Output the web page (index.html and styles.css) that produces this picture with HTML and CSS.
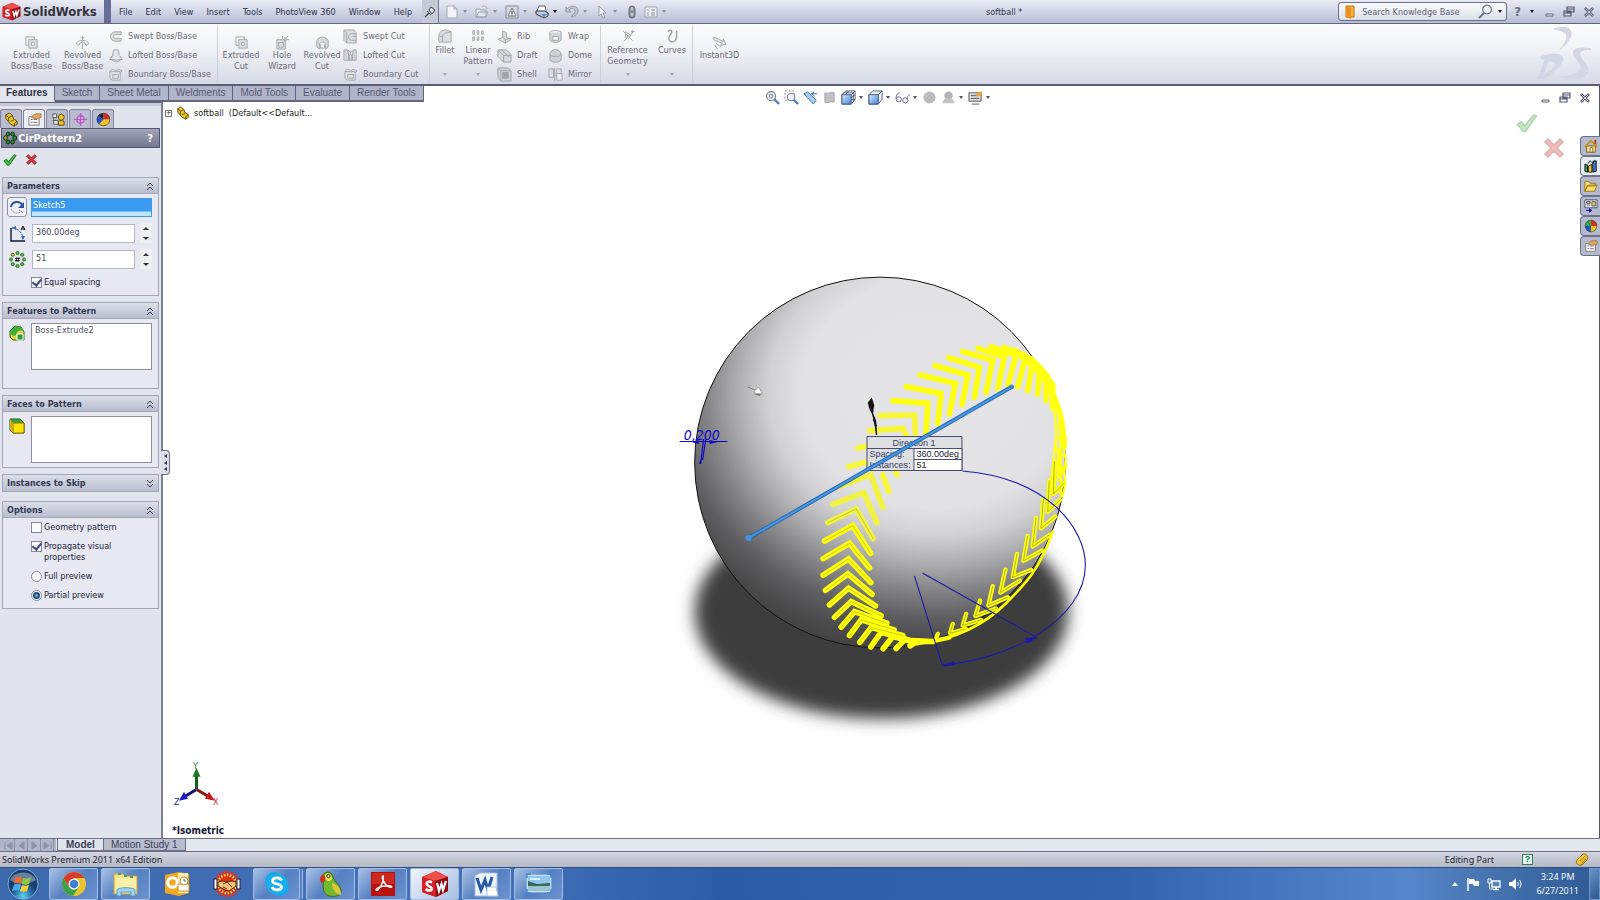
FILE: index.html
```html
<!DOCTYPE html>
<html lang="en">
<head>
<meta charset="utf-8">
<title>SolidWorks - softball</title>
<link rel="stylesheet" href="styles.css">
</head>
<body>
<svg class="defs" aria-hidden="true">
  <defs>
    <linearGradient id="gold" x2="1" y2="1"><stop offset="0" stop-color="#ffe860"/><stop offset="1" stop-color="#d89a10"/></linearGradient>
    <linearGradient id="blueface" x2="1" y2="1"><stop offset="0" stop-color="#d8ecff"/><stop offset="1" stop-color="#3f83d8"/></linearGradient>
    <symbol id="part" viewBox="0 0 16 16"><path d="M2 3l4-2 3 3 1 3 4 3v3l-3 2-4-2-5-6z" fill="#f0c828" stroke="#5a4208"/><path d="M2 3l3 3 4-2M5 6v4M7 10l4-2M11 12l3-2M11 12v3" fill="none" stroke="#5a4208"/></symbol>
    <symbol id="prop" viewBox="0 0 16 16"><path d="M2 5h11v9H2z" fill="#fafafa" stroke="#777"/><path d="M4 8h2M7 8h4M4 11h2M7 11h4" stroke="#667"/><path d="M5 6c2-5 5-4 10-4v4c-3 0-4 2-7 1z" fill="#e0a860" stroke="#96602a" stroke-width=".7"/></symbol>
    <symbol id="ball" viewBox="0 0 16 16"><path d="M8 8V1a7 7 0 0 0-7 7z" fill="#2bad3b"/><path d="M8 8V1a7 7 0 0 1 7 7z" fill="#d92a25"/><path d="M8 8h7a7 7 0 0 1-7 7z" fill="#efc323"/><path d="M8 8v7a7 7 0 0 1-7-7z" fill="#2554c4"/><circle cx="8" cy="8" r="6.7" fill="none" stroke="#444" stroke-width=".7"/></symbol>
    <symbol id="ball2" viewBox="0 0 16 16"><path d="M8 8L2 4a7 7 0 0 1 6-3z" fill="#222"/><path d="M8 8V1a7 7 0 0 1 7 7z" fill="#d92a25"/><path d="M8 8h7a7 7 0 0 1-12 5z" fill="#efc323"/><path d="M8 8l-5 5a7 7 0 0 1-1-9z" fill="#2554c4"/><circle cx="8" cy="8" r="6.7" fill="none" stroke="#444" stroke-width=".7"/></symbol>
    <symbol id="check" viewBox="0 0 16 16"><path d="M1 9l3-2 2 3 7-8 2 1-8 11H5z" fill="#3dbb3d" stroke="#167a1c"/></symbol>
    <symbol id="cross" viewBox="0 0 16 16"><path d="M2 4l2-2 4 4 4-4 2 2-4 4 4 4-2 2-4-4-4 4-2-2 4-4z" fill="#e03030" stroke="#8f1515"/></symbol>
    <symbol id="up2" viewBox="0 0 10 10"><path d="M2 5l3-3 3 3M2 9l3-3 3 3" fill="none" stroke="#333a4d"/></symbol>
    <symbol id="down2" viewBox="0 0 10 10"><path d="M2 1l3 3 3-3M2 5l3 3 3-3" fill="none" stroke="#333a4d"/></symbol>
    <symbol id="tri" viewBox="0 0 6 4"><path d="M1 0h4L3 3z" fill="currentColor"/></symbol>
    <symbol id="min" viewBox="0 0 12 12"><path d="M3 8h7v2H3z" fill="#eef" stroke="#555b70" stroke-width=".9"/></symbol>
    <symbol id="restore" viewBox="0 0 12 12"><path d="M4 1h7v5H4zM4 3h7M1 5h7v5H1zM1 7h7" fill="none" stroke="#555b70" stroke-width="1.2"/></symbol>
    <symbol id="close" viewBox="0 0 12 12"><path d="M2 2l8 8M10 2l-8 8" stroke="#555b70" stroke-width="2.6"/><path d="M2.500 2.500l7 7M9.500 2.500l-7 7" stroke="#dfe2ee" stroke-width=".9"/></symbol>
    <symbol id="swcube" viewBox="0 0 28 28"><path d="M1 7L15 1l12 6v14l-12 6L1 22z" fill="#b8141c"/><path d="M1 7l14-6 12 6-13 4z" fill="#ee5048"/><path d="M14 11l13-4v14l-12 6z" fill="#8e0d14"/><path d="M1 7l13 4 1 16L1 22z" fill="#d62128"/><path d="M11 12.500c-3-2-6-.5-5 2 .8 2 5 2 4.700 4.500-.3 2-4 2-6 0" fill="none" stroke="#fff" stroke-width="2.500"/><path d="M16 13l2 8 2.500-7 1.500 6 3-9" fill="none" stroke="#fff" stroke-width="2.200"/></symbol>
    <symbol id="cube" viewBox="0 0 16 16"><path d="M1 5l4-4h10v9l-4 5H1z" fill="#eef5ff" stroke="#4a5878"/><path d="M1 5h10v10H1z" fill="url(#blueface)" stroke="#4a5878"/><path d="M11 5l4-4" stroke="#4a5878"/></symbol>
    <symbol id="cubewire" viewBox="0 0 16 16"><path d="M1 5l4-4h10v9l-4 5H1z" fill="#fff" stroke="#4a5878"/><path d="M1 5h10v10H1z" fill="url(#blueface)" stroke="#4a5878"/><path d="M11 5l4-4M3 3h10v9M8 1L5 5M11 10h4M11 8l4-3" fill="none" stroke="#4a5878"/></symbol>
    <symbol id="box3" viewBox="0 0 16 16"><path d="M2 2h9v4M2 2v9h4" fill="none" stroke="currentColor"/><path d="M5 5h9v9H5z" fill="#dfe0e5" stroke="currentColor"/><path d="M8 8h3v3H8z" fill="#fff" stroke="currentColor"/></symbol>
    <symbol id="revolve" viewBox="0 0 16 16"><path d="M8 1v14M6 3h4M3 11c-3-3 0-5 5-5s8 2 5 5M3 11c2 1 2-4 4-3M13 11c-2 1-2-4-4-3" fill="none" stroke="currentColor"/></symbol>
    <symbol id="sweep" viewBox="0 0 16 16"><path d="M14 3H8C1 3 1 13 8 13h6v-3H8c-3 0-3-4 0-4h6z" fill="#dcdde3" stroke="currentColor"/></symbol>
    <symbol id="loft" viewBox="0 0 16 16"><path d="M6 2h5l1 6 3 4-6 3-7-3 3-4z" fill="#e4e5ea" stroke="currentColor"/><path d="M5 8l-3 4 7 1 6-1" fill="none" stroke="currentColor"/></symbol>
    <symbol id="bound" viewBox="0 0 16 16"><path d="M2 5h11v9H4L2 11zM2 5c1-3 4-3 6-1 3-2 5-1 7 0l-2 2M5 8h6v4H5z" fill="#e2e3e8" stroke="currentColor"/></symbol>
    <symbol id="dome" viewBox="0 0 16 16"><path d="M2 7c0-7 12-7 12 0v6c-3 3-9 3-12 0z" fill="#d0d1d6" stroke="currentColor"/><path d="M2 7c3 3 9 3 12 0" fill="none" stroke="currentColor"/></symbol>
    <symbol id="wrap" viewBox="0 0 16 16"><ellipse cx="8" cy="4" rx="6" ry="2.500" fill="#eee" stroke="currentColor"/><path d="M2 4v8c3 3 9 3 12 0V4M5 8h6v4H5z" fill="#d4d5da" stroke="currentColor"/></symbol>
    <symbol id="shell" viewBox="0 0 16 16"><path d="M1 1h11l3 3v11H4l-3-3z" fill="#d2d3d8" stroke="currentColor"/><path d="M6 6h6v6H6z" fill="#a3a4aa" stroke="currentColor"/><path d="M1 1l3 3h11M4 4v11" fill="none" stroke="currentColor"/></symbol>
    <symbol id="draft" viewBox="0 0 16 16"><path d="M1 2h9l5 5v8H7L1 9z" fill="#d8d9de" stroke="currentColor"/><path d="M1 2l6 6v7M7 8h8M5 2l8 8" fill="none" stroke="currentColor"/></symbol>
    <symbol id="rib" viewBox="0 0 16 16"><path d="M1 11l5-2V2l4 2v5l5 2-6 4z" fill="#dcdde2" stroke="currentColor"/><path d="M6 9l3 2 6-1M9 11v4" fill="none" stroke="currentColor"/></symbol>
    <symbol id="mirror" viewBox="0 0 16 16"><path d="M1 2h5v9H1zM9 2h5v9H9z" fill="#dcdde2" stroke="currentColor"/><path d="M7 1v14M9 7h6v7H9z" fill="#eee" stroke="currentColor"/></symbol>
    <symbol id="cutloft" viewBox="0 0 16 16"><path d="M1 2h4l2 11H1zM14 2h-3L9 13h5zM5 2l3 3 3-3M6 9l2-3 2 3v4H6z" fill="#d5d6db" stroke="currentColor"/></symbol>
    <symbol id="cutsweep" viewBox="0 0 16 16"><path d="M1 1h11l2 3v11H4l-3-3z" fill="#dcdde2" stroke="currentColor"/><path d="M14 5H9c-4 0-4 7 0 7h5M14 8h-4M1 1l3 3v11" fill="none" stroke="currentColor"/></symbol>
  </defs>
</svg>

<header class="titlebar">
  <div class="brand"><svg width="19" height="19"><use href="#swcube"/></svg><b>SolidWorks</b></div>
  <nav class="menu">
    <a href="#">File</a><a href="#">Edit</a><a href="#">View</a><a href="#">Insert</a><a href="#">Tools</a><a href="#">PhotoView 360</a><a href="#">Window</a><a href="#">Help</a>
  </nav>
  <button class="pin" aria-label="Pin menu"><svg width="12" height="12" viewBox="0 0 12 12"><path d="M1 11l4-4" stroke="#444" stroke-width="1.300"/><path d="M3 5l4 4M5 4l2-3 4 3-3 4z" fill="#dde" stroke="#444"/></svg></button>
  <div class="quick">
    <button aria-label="New"><svg width="14" height="14" viewBox="0 0 14 14"><path d="M2 1h7l3 3v9H2zM9 1v3h3" fill="#f4f5f8" stroke="#a8abb8"/></svg></button><svg class="dd" width="6" height="4"><use href="#tri"/></svg>
    <button aria-label="Open"><svg width="14" height="14" viewBox="0 0 14 14"><path d="M1 4h4l1 1h5v7H1zM1 12l3-5h9l-2 5zM7 2c2-2 4-1 5 2" fill="#e4e5ea" stroke="#a0a3b0"/></svg></button><svg class="dd" width="6" height="4"><use href="#tri"/></svg>
    <button aria-label="Save"><svg width="14" height="14" viewBox="0 0 14 14"><path d="M1 1h12v12H1z" fill="#d4d6de" stroke="#8a8d98"/><path d="M7 3l4 8H3z" fill="#f2f2f2" stroke="#777"/><path d="M7 6v3M7 9.500v1" stroke="#333"/></svg></button><svg class="dd" width="6" height="4"><use href="#tri"/></svg>
    <button aria-label="Print"><svg width="14" height="14" viewBox="0 0 14 14"><path d="M2 6l2-5h6l1 5" fill="#fff" stroke="#667"/><path d="M1 6h9l3 2v3l-4 2-8-4z" fill="#c8ccd6" stroke="#334"/><path d="M6 9l6 0-3 3z" fill="#3f95dc"/></svg></button><svg class="dd dark" width="6" height="4"><use href="#tri"/></svg>
    <button aria-label="Undo"><svg width="14" height="14" viewBox="0 0 14 14"><path d="M1 2v5h5L4 5c3-3 7-1 6 2-1 2-3 3-4 5 4-1 7-3 7-6 0-5-7-7-11-2z" fill="#c5c7d0" stroke="#9699a6"/></svg></button><svg class="dd" width="6" height="4"><use href="#tri"/></svg>
    <button aria-label="Select"><svg width="14" height="14" viewBox="0 0 14 14"><path d="M4 1v10l2-2 2 4 2-1-2-4h3z" fill="#eceef3" stroke="#9da0ad"/></svg></button><svg class="dd" width="6" height="4"><use href="#tri"/></svg>
    <button aria-label="Rebuild"><svg width="14" height="14" viewBox="0 0 14 14"><rect x="4" y="1" width="6" height="12" rx="3" fill="#8a8d98" stroke="#70737e"/><circle cx="7" cy="4" r="1.500" fill="#c5c7d0"/><circle cx="7" cy="9.500" r="1.500" fill="#c5c7d0"/></svg></button>
    <button aria-label="Options"><svg width="14" height="14" viewBox="0 0 14 14"><path d="M1 2h12v10H1z" fill="#eceef3" stroke="#a0a3b0"/><path d="M3 5h2M7 5h4M3 8h2M7 8h4M3 10h2M7 10h4" stroke="#8c8f9c"/></svg></button><svg class="dd" width="6" height="4"><use href="#tri"/></svg>
  </div>
  <h1 class="doc-title">softball *</h1>
  <div class="search">
    <svg width="12" height="14" viewBox="0 0 12 14"><path d="M2 1h8v11H2z" fill="#f8b840" stroke="#b87810"/><path d="M2 1l5 2v11l-5-2z" fill="#f09018"/></svg>
    <input type="text" value="Search Knowledge Base" aria-label="Search Knowledge Base">
    <svg width="15" height="15" viewBox="0 0 15 15"><circle cx="9" cy="5.500" r="4.300" fill="#eef7ff" stroke="#66718a" stroke-width="1.200"/><path d="M6 9l-5 5" stroke="#66718a" stroke-width="2"/></svg>
    <svg class="dd dark" width="6" height="4"><use href="#tri"/></svg>
  </div>
  <div class="wincontrols">
    <button class="help" aria-label="Help">?</button><svg class="dd dark" width="6" height="4"><use href="#tri"/></svg>
    <button aria-label="Minimize"><svg width="12" height="12"><use href="#min"/></svg></button>
    <button aria-label="Restore"><svg width="12" height="12"><use href="#restore"/></svg></button>
    <button aria-label="Close"><svg width="12" height="12"><use href="#close"/></svg></button>
  </div>
</header>

<section class="ribbon" aria-label="Features commands">
  <button class="big w50"><svg width="15" height="15"><use href="#box3"/></svg><span>Extruded<br>Boss/Base</span></button>
  <button class="big w50"><svg width="15" height="15"><use href="#revolve"/></svg><span>Revolved<br>Boss/Base</span></button>
  <div class="stack w110">
    <button><svg width="15" height="15"><use href="#sweep"/></svg>Swept Boss/Base</button>
    <button><svg width="15" height="15"><use href="#loft"/></svg>Lofted Boss/Base</button>
    <button><svg width="15" height="15"><use href="#bound"/></svg>Boundary Boss/Base</button>
  </div>
  <i class="sep"></i>
  <button class="big w44"><svg width="15" height="15"><use href="#box3"/></svg><span>Extruded<br>Cut</span></button>
  <button class="big w38"><svg width="15" height="15" viewBox="0 0 16 16"><path d="M2 5h9v10H2zM4 8h5v5H4z" fill="#dedfe4" stroke="currentColor"/><path d="M9 7l5-6M8 1v3M12 5h3M10 2l2 4" stroke="currentColor"/></svg><span>Hole<br>Wizard</span></button>
  <button class="big w42"><svg width="15" height="15" viewBox="0 0 16 16"><path d="M2 6c2-5 10-5 12 0v7l-3 2v-6c0-2-6-2-6 0v6l-3-2z" fill="#d9dadf" stroke="currentColor"/><path d="M6 10v4h4v-4" fill="none" stroke="currentColor"/></svg><span>Revolved<br>Cut</span></button>
  <div class="stack w85">
    <button><svg width="15" height="15"><use href="#cutsweep"/></svg>Swept Cut</button>
    <button><svg width="15" height="15"><use href="#cutloft"/></svg>Lofted Cut</button>
    <button><svg width="15" height="15"><use href="#bound"/></svg>Boundary Cut</button>
  </div>
  <i class="sep"></i>
  <button class="big menu-btn w28"><svg width="14" height="14" viewBox="0 0 16 16"><path d="M1 15V8c0-4 3-7 8-7l6 2v12z" fill="#dcdde2" stroke="currentColor"/><path d="M1 8l4 1c0-3 3-5 6-5l4-1M5 9v6" fill="none" stroke="currentColor"/></svg><span>Fillet</span><svg class="dd" width="6" height="4"><use href="#tri"/></svg></button>
  <button class="big menu-btn w38"><svg width="14" height="14" viewBox="0 0 16 16"><path d="M2 2h2v4H2zM7 2h2v4H7zM12 2h2v4h-2zM2 9h2v4H2zM7 9h2v4H7zM12 9h2v4h-2z" fill="#ddd" stroke="currentColor"/></svg><span>Linear<br>Pattern</span><svg class="dd" width="6" height="4"><use href="#tri"/></svg></button>
  <div class="stack w50">
    <button><svg width="15" height="15"><use href="#rib"/></svg>Rib</button>
    <button><svg width="15" height="15"><use href="#draft"/></svg>Draft</button>
    <button><svg width="15" height="15"><use href="#shell"/></svg>Shell</button>
  </div>
  <div class="stack w50">
    <button><svg width="15" height="15"><use href="#wrap"/></svg>Wrap</button>
    <button><svg width="15" height="15"><use href="#dome"/></svg>Dome</button>
    <button><svg width="15" height="15"><use href="#mirror"/></svg>Mirror</button>
  </div>
  <i class="sep"></i>
  <button class="big menu-btn w50"><svg width="14" height="14" viewBox="0 0 16 16"><path d="M2 2l11 11M3 14L14 3M8 12l4-6M13 1v4M11 3h5M5 3l5 3-5 4z" fill="none" stroke="currentColor"/></svg><span>Reference<br>Geometry</span><svg class="dd" width="6" height="4"><use href="#tri"/></svg></button>
  <button class="big menu-btn w38"><svg width="14" height="14" viewBox="0 0 16 16"><path d="M3 3c4-3 6-1 4 2s-4 5-2 8 7 2 8-2-1-6 1-9" fill="none" stroke="currentColor" stroke-width="1.800"/></svg><span>Curves</span><svg class="dd" width="6" height="4"><use href="#tri"/></svg></button>
  <i class="sep"></i>
  <button class="big w50"><svg width="15" height="15" viewBox="0 0 16 16"><path d="M2 2l10 5v-3l3 6-6 1 2-2-9-4zM4 9l6 4M3 11l3 4" fill="#e8e9ee" stroke="currentColor"/></svg><span>Instant3D</span></button>
  <svg class="ds" width="58" height="58" viewBox="0 0 58 58"><path d="M18 4c16-5 26 2 6 21 8-10 12-18-6-21zM4 32c18-6 34-3 12 16-6 5-10 6-14 6l7-19c-2-1-4-1-5-3zm8 4L7 50c12-5 18-15 5-14zM55 24c-18-3-22 2-13 12 6 7 5 13-15 16 22 4 30-3 22-14-7-9-9-13 6-14z" fill="#d3d6e4" stroke="#d3d6e4"/></svg>
</section>

<main class="workspace">
  <nav class="cmdtabs">
    <a href="#" class="on">Features</a><a href="#">Sketch</a><a href="#">Sheet Metal</a><a href="#">Weldments</a><a href="#">Mold Tools</a><a href="#">Evaluate</a><a href="#">Render Tools</a>
  </nav>
  <aside class="panel">
    <div class="ptabs">
      <button aria-label="Feature tree"><svg width="15" height="15"><use href="#part"/></svg></button>
      <button class="on" aria-label="Properties"><svg width="15" height="15"><use href="#prop"/></svg></button>
      <button aria-label="Configurations"><svg width="15" height="15" viewBox="0 0 16 16"><path d="M3 2h4v4H3zM3 9h3M4 6v7h5M4 9h5" fill="#eee" stroke="#555"/><path d="M9 4l3-2 3 2v3l-3 2-3-2zM9 10l3-1 3 1v4H9z" fill="#f0c828" stroke="#5a4208"/></svg></button>
      <button aria-label="Dimensions"><svg width="15" height="15" viewBox="0 0 16 16"><circle cx="8" cy="8" r="4" fill="none" stroke="#c24fd0" stroke-width="1.400"/><path d="M8 1v14M1 8h14" stroke="#c24fd0" stroke-width="1.300"/></svg></button>
      <button aria-label="Appearances"><svg width="15" height="15"><use href="#ball2"/></svg></button>
    </div>
    <h2 class="ptitle"><svg width="14" height="14" viewBox="0 0 14 14"><g fill="#2c8c38" stroke="#0c3010"><ellipse cx="5" cy="3" rx="1.800" ry="2"/><ellipse cx="9.500" cy="3" rx="1.800" ry="2"/><ellipse cx="2.500" cy="7" rx="1.800" ry="2.300" fill="#d0a020"/><ellipse cx="11.800" cy="7" rx="1.800" ry="2.300"/><ellipse cx="5" cy="11" rx="1.800" ry="2"/><ellipse cx="9.500" cy="11" rx="1.800" ry="2"/></g></svg><span>CirPattern2</span><button aria-label="Help">?</button></h2>
    <div class="confirm"><button aria-label="OK"><svg width="14" height="14"><use href="#check"/></svg></button><button aria-label="Cancel"><svg width="13" height="13"><use href="#cross"/></svg></button></div>

    <section class="group">
      <h3>Parameters<svg width="10" height="10"><use href="#up2"/></svg></h3>
      <div class="body params">
        <div class="row"><button class="dir" aria-label="Reverse direction"><svg width="16" height="16" viewBox="0 0 16 16"><path d="M2 8c1-6 9-7 12-1" fill="none" stroke="#2b50a8" stroke-width="2"/><path d="M15 3v6H9z" fill="#2b50a8"/><path d="M2 10c2 5 8 5 11 2M10 11l4 3" fill="none" stroke="#999" stroke-dasharray="2 1"/></svg></button><input class="sel" type="text" value="Sketch5" aria-label="Pattern axis"></div>
        <div class="row"><svg class="ric" width="17" height="17" viewBox="0 0 17 17"><path d="M2 3v13h14" fill="none" stroke="#111a30" stroke-width="1.400"/><path d="M3 3c6 0 11 5 11 11" fill="none" stroke="#2b6cc0" stroke-dasharray="3 1"/><path d="M3 3l4-2v4zM14 15l-2-4h4z" fill="#2b6cc0"/><path d="M12 5l2-4 2 4M13 4h3" fill="none" stroke="#111"/></svg><input class="num" type="text" value="360.00deg" aria-label="Angle"><span class="spin"><button aria-label="Increase"></button><button class="dn" aria-label="Decrease"></button></span></div>
        <div class="row"><svg class="ric" width="17" height="17" viewBox="0 0 17 17"><g fill="#58b84c" stroke="#1f6a1c" stroke-width=".8"><circle cx="8.500" cy="2" r="1.600"/><circle cx="13.200" cy="3.800" r="1.600"/><circle cx="15" cy="8.500" r="1.600"/><circle cx="13.200" cy="13.200" r="1.600"/><circle cx="8.500" cy="15" r="1.600"/><circle cx="3.800" cy="13.200" r="1.600"/><circle cx="2" cy="8.500" r="1.600"/><circle cx="3.800" cy="3.800" r="1.600" fill="#f0a030"/></g><path d="M6 7.500h5M6 9.500h5M8 6l-1 5M10 6l-1 5" stroke="#111" stroke-width=".8"/></svg><input class="num" type="text" value="51" aria-label="Number of instances"><span class="spin"><button aria-label="Increase"></button><button class="dn" aria-label="Decrease"></button></span></div>
        <label><input type="checkbox" checked>Equal spacing</label>
      </div>
    </section>

    <section class="group">
      <h3>Features to Pattern<svg width="10" height="10"><use href="#up2"/></svg></h3>
      <div class="body feats"><svg class="ric" width="16" height="16" viewBox="0 0 16 16"><path d="M1 6l5-5 6 1 3 5v8H4l-3-3z" fill="#e8d040" stroke="#246b22"/><path d="M1 6l5-5 6 1 2 3-5 1-3 5-5-2z" fill="#3eae3a"/><path d="M8 9h6v6H8z" fill="#2f9c34" stroke="#fff"/></svg><textarea aria-label="Features to Pattern" spellcheck="false">Boss-Extrude2</textarea></div>
    </section>

    <section class="group">
      <h3>Faces to Pattern<svg width="10" height="10"><use href="#up2"/></svg></h3>
      <div class="body faces"><svg class="ric" width="16" height="16" viewBox="0 0 16 16"><path d="M1 1l10 0 4 4v10H4l-3-3z" fill="#38a83a" stroke="#1d5d1d"/><path d="M4 5h11v10H4z" fill="#ffe40a" stroke="#8a7300"/><path d="M1 1l3 4v10l-3-3z" fill="#d8a818"/></svg><textarea aria-label="Faces to Pattern" spellcheck="false"></textarea></div>
    </section>

    <section class="group skip"><h3>Instances to Skip<svg width="10" height="10"><use href="#down2"/></svg></h3></section>

    <section class="group">
      <h3>Options<svg width="10" height="10"><use href="#up2"/></svg></h3>
      <div class="body opts">
        <label><input type="checkbox">Geometry pattern</label>
        <label><input type="checkbox" checked>Propagate visual<br>properties</label>
        <label><input type="radio" name="preview">Full preview</label>
        <label><input type="radio" name="preview" checked>Partial preview</label>
      </div>
    </section>
    <button class="handle" aria-label="Collapse panel"><i></i><i></i><i></i></button>
  </aside>

  <section class="view">
    <svg class="scene" viewBox="163 86 1437 752" role="img" aria-label="Softball model with circular stitch pattern">
      <defs>
        <radialGradient id="shade" gradientUnits="userSpaceOnUse" cx="0" cy="0" r="1" gradientTransform="translate(936 392) scale(320 276)">
          <stop offset="0" stop-color="#e4e4e7"/><stop offset=".42" stop-color="#e2e2e5"/><stop offset=".52" stop-color="#d2d2d5"/><stop offset=".62" stop-color="#aeaeb1"/><stop offset=".72" stop-color="#848487"/><stop offset=".82" stop-color="#5e5e60"/><stop offset=".92" stop-color="#484849"/><stop offset="1" stop-color="#404041"/>
        </radialGradient>
        <filter id="soft" x="-20%" y="-20%" width="140%" height="140%"><feGaussianBlur stdDeviation="8"/></filter>
      </defs>
      <ellipse cx="882" cy="612" rx="187" ry="107" fill="#3d3d3d" filter="url(#soft)"/>
      <circle cx="880.500" cy="462.500" r="185.500" fill="url(#shade)" stroke="#111" stroke-width="1"/>

      <g transform="translate(670 260) scale(.3333)" fill="none" stroke="#ffff10" stroke-width="17" stroke-linecap="round" stroke-linejoin="miter">
        <path d="M965 260L1040 285L1016 375M925 265L1005 290L985 385M880 275L970 300L950 397M838 293L930 322L915 412M797 317L895 345L878 433M752 345L858 370L840 462M710 380L815 400L805 490M670 422L775 430L770 520"/>
        <path stroke="#f8f838" d="M632 467L735 465L738 520M600 512L700 505L712 528M565 565L590 558M538 620L590 606M683 645L677 630M658 695L640 645"/>
        <path d="M1005 262L1068 295L1045 380M1035 270L1090 305L1075 392M1062 283L1112 322L1105 402M1085 296L1132 345L1130 422M1108 318L1150 375L1150 445"/>
        <path d="M1020 270C1090 300 1140 370 1160 425S1180 500 1184 560"/>
        <path stroke-width="6" d="M1152 430l8 60 20 10M1158 460l2 70 24 18M1162 500l-2 70 26 20M1158 540l-6 70 34 20M1154 590l-6 64 38 16M1150 620l-8 70 40 10M1182 500l8 40-6 30 6 30-6 30 4 40-8 40M1172 470l4 240"/>
      </g>
      <g transform="translate(670 460) scale(.3333)" fill="none" stroke="#ffff08" stroke-linecap="round">
        <g stroke-width="17">
          <path stroke="#f2f240" d="M508 80L604 44L640 142M490 133L583 98L622 188M475 188L560 147L611 236"/>
          <path d="M465 243L550 197L603 280M461 296L540 250L600 324M461 346L537 297L604 368M468 391L535 342L608 403M480 435L537 385L618 438M495 472L545 425L635 468M515 502L555 455L652 490M540 527L575 480L674 510M571 547L605 503L700 527M604 561L635 517L718 540M641 567L670 530L742 548M680 566L705 540L765 545M722 558L745 543L790 545"/>
        </g>
        <path stroke="#b5b51c" stroke-width="2" d="M475 188L560 147L611 236M465 243L550 197L603 280M461 296L540 250L600 324M461 346L537 297L604 368M468 391L535 342L608 403M480 435L537 385L618 438M495 472L545 425L635 468M515 502L555 455L652 490M540 527L575 480L674 510M571 547L605 503L700 527"/>
        <g stroke-linejoin="round">
          <path stroke-width="13" d="M805 522L798 542L840 533M850 492L842 520L890 508M890 462L880 497L935 480M932 422L918 468L980 446M970 379L957 437L1015 412M1008 329L993 398L1052 362M1043 282L1030 352L1085 330M1075 228L1062 303L1118 272M1100 174L1090 260L1140 225M1122 118L1115 205L1158 170M1140 62L1135 156L1172 120M1155 5L1152 102L1184 70M1170 -30L1168 50L1188 20"/>
          <path stroke="#8c8c24" stroke-width="2" d="M850 492L842 520L890 508M890 462L880 497L935 480M932 422L918 468L980 446M970 379L957 437L1015 412M1008 329L993 398L1052 362M1043 282L1030 352L1085 330M1075 228L1062 303L1118 272M1100 174L1090 260L1140 225M1122 118L1115 205L1158 170M1140 62L1135 156L1172 120M1155 5L1152 102L1184 70"/>
          <path stroke-width="8" d="M745 552C860 540 950 490 1010 430S1110 330 1150 215"/>
        </g>
      </g>

      <g fill="none" stroke="#1a1aa8" stroke-width="1.100">
        <path d="M963 471C1050 478 1086 530 1086 565C1086 620 1010 660 943 665M915 576L943 666M923 573L1038 638"/>
        <path d="M943 666l11-4 1 3zM1037 638l-11 1 2 4z" fill="#1a1aa8"/>
      </g>

      <path d="M869 403l3-4 2 6-1 7-2-2zM872 411l4 10 1 14M874 419l3 7" fill="#111" stroke="#111" stroke-width="1.400"/>
      <path d="M748 387l8 3" fill="none" stroke="#888"/><path d="M755 391l4-4 4 7-8-1z" fill="#fff" stroke="#999" stroke-width=".8"/><path d="M754 394l6 2 2-2z" fill="#777"/>

      <g class="dim"><text x="684" y="440">0,200</text><path d="M680 441.500h48M704 439l-3 25M706 440l-3 20M700 464l2-6" fill="none" stroke="#0b0bc8" stroke-width="1.200"/><path d="M692 442l7-2v4zM718 442l-8-2v4z" fill="#0b0bc8"/></g>

      <g class="callout">
        <path d="M867.500 436.500h95v34h-95z" fill="#dedfe3" stroke="#464a6c"/>
        <path d="M914.500 448.500h48v22h-48z" fill="#fff" stroke="#464a6c"/>
        <path d="M867.500 448.500h95M914.500 459.500h48" stroke="#464a6c"/>
        <text x="893" y="446">Direction 1</text><text x="870" y="457">Spacing:</text><text x="870" y="468">Instances:</text>
        <text class="val" x="917" y="457">360.00deg</text><text class="val" x="917" y="468">51</text>
      </g>

      <path d="M749 538L1012 387" stroke="#2468b0" stroke-width="4" stroke-linecap="round"/><path d="M749 538L1012 387" stroke="#4c98e0" stroke-width="2"/><circle cx="749" cy="538" r="3" fill="#3f92e4"/><circle cx="1012" cy="387" r="2.500" fill="#3c86cc"/>

      <g class="triad">
        <path d="M196.500 790V776" stroke="#14601a" stroke-width="3"/><path d="M192.500 777l4-9 4 9z" fill="#1c7a24"/>
        <path d="M197 790l12 7" stroke="#8c1414" stroke-width="3"/><path d="M205 799l4-7 6 9z" fill="#c81c1c"/>
        <path d="M196 790l-10 6" stroke="#101080" stroke-width="3"/><path d="M179 801l5-9 4 7z" fill="#1c1cc8"/>
        <text x="193" y="769" fill="#2f8c3a">Y</text><text x="213" y="805" fill="#d03030">X</text><text x="174" y="805" fill="#2a2a90">Z</text>
      </g>
      <text class="iso" x="172" y="834">*Isometric</text>
    </svg>

    <div class="tree"><span class="plus">+</span><svg width="14" height="14"><use href="#part"/></svg><span>softball&nbsp; (Default&lt;&lt;Default...</span></div>

    <div class="hud">
      <button aria-label="Zoom to fit"><svg width="15" height="15" viewBox="0 0 16 16"><circle cx="6.500" cy="6.500" r="4.800" fill="#eef3fa" stroke="#7a8290" stroke-width="1.200"/><path d="M10 10l5 5" stroke="#4b7cb8" stroke-width="2.400"/><circle cx="6.500" cy="6.500" r="2" fill="none" stroke="#667"/></svg></button>
      <button aria-label="Zoom to area"><svg width="15" height="15" viewBox="0 0 16 16"><path d="M1 1h10v10H1z" fill="none" stroke="#889" stroke-dasharray="2 2"/><circle cx="7.500" cy="7.500" r="4" fill="#eef3fa" stroke="#7a8290" stroke-width="1.200"/><path d="M10.500 10.500l4.500 4.500" stroke="#4b7cb8" stroke-width="2.400"/></svg></button>
      <button aria-label="Previous view"><svg width="15" height="15" viewBox="0 0 16 16"><path d="M1 4l4-2 9 9-3 4z" fill="#a9d0f4" stroke="#3c74b4"/><path d="M9 4h6M9 4l3-2M9 4l3 2" stroke="#2f65a8" fill="none"/></svg></button>
      <button aria-label="Section view"><svg width="15" height="15" viewBox="0 0 16 16"><path d="M3 3c4 2 6-2 10 0v10c-4-2-6 2-10 0z" fill="#bfc0c3" stroke="#aaa"/></svg></button>
      <button aria-label="View orientation"><svg width="15" height="15"><use href="#cubewire"/></svg><svg class="dd" width="6" height="4"><use href="#tri"/></svg></button>
      <button aria-label="Display style"><svg width="15" height="15"><use href="#cube"/></svg><svg class="dd" width="6" height="4"><use href="#tri"/></svg></button>
      <button aria-label="Hide or show items"><svg width="15" height="15" viewBox="0 0 16 16"><circle cx="4" cy="10" r="2.800" fill="#eef" stroke="#667084"/><circle cx="11" cy="11" r="2.800" fill="#eef" stroke="#667084"/><path d="M1 9c0-4 2-6 4-6M13 10c0-4 1-4 3-5" fill="none" stroke="#667084"/></svg><svg class="dd" width="6" height="4"><use href="#tri"/></svg></button>
      <button aria-label="Edit appearance"><svg width="15" height="15" viewBox="0 0 16 16"><circle cx="8" cy="8" r="6.500" fill="#bcbcbe"/></svg></button>
      <button aria-label="Apply scene"><svg width="15" height="15" viewBox="0 0 16 16"><circle cx="8" cy="6" r="4.500" fill="#b4b4b6"/><path d="M1 14l3-5h8l3 5z" fill="#c4c4c6"/></svg><svg class="dd" width="6" height="4"><use href="#tri"/></svg></button>
      <button aria-label="View settings"><svg width="15" height="15" viewBox="0 0 16 16"><path d="M1 3h13v9H1zM4 15h8" fill="#d8dae0" stroke="#555"/><path d="M3 6h9M3 9h9" stroke="#555"/><path d="M7 5l8-4v4l-5 2z" fill="#e8a840"/></svg><svg class="dd" width="6" height="4"><use href="#tri"/></svg></button>
    </div>
    <div class="docctl">
      <button aria-label="Minimize document"><svg width="12" height="12"><use href="#min"/></svg></button>
      <button aria-label="Restore document"><svg width="12" height="12"><use href="#restore"/></svg></button>
      <button aria-label="Close document"><svg width="12" height="12"><use href="#close"/></svg></button>
    </div>
    <div class="corner"><button aria-label="Accept"><svg width="24" height="22"><use href="#check"/></svg></button><button class="no" aria-label="Reject"><svg width="24" height="24"><use href="#cross"/></svg></button></div>
    <div class="taskpane">
      <button aria-label="Resources"><svg width="14" height="14" viewBox="0 0 16 16"><path d="M3 8h10v7H3z" fill="#fbe58c" stroke="#7a5a10"/><path d="M1 9l7-7 7 7" fill="none" stroke="#c8940c" stroke-width="2"/><path d="M12 1h2v5h-2z" fill="#c03028"/><path d="M7 10h3v5H7z" fill="#fff" stroke="#7a5a10"/></svg></button>
      <button class="on" aria-label="Design library"><svg width="14" height="14" viewBox="0 0 16 16"><path d="M1 6l3 1v8l-3-1z" fill="#3c9c3c" stroke="#111"/><path d="M5 8l4-2v9H5z" fill="#e8c830" stroke="#111"/><path d="M10 3l4-1v12l-4 1z" fill="#3f78c4" stroke="#111"/><path d="M4 6l3-4 3 3 2-4" fill="none" stroke="#222"/></svg></button>
      <button aria-label="File explorer"><svg width="14" height="14" viewBox="0 0 16 16"><path d="M1 3h5l1 2h6v3H4l-3 6zM4 7h11l-3 7H1z" fill="#fbdf70" stroke="#9a7410"/></svg></button>
      <button aria-label="View palette"><svg width="14" height="14" viewBox="0 0 16 16"><path d="M1 1h14v9H1z" fill="#eef" stroke="#445"/><path d="M3 3h4v2H3zM3 7h4M9 3h4v5H9z" fill="#e8d860" stroke="#445"/><path d="M2 13h6M6 11l3 2-3 2z" stroke="#1010a0" fill="#1010a0"/></svg></button>
      <button aria-label="Appearances"><svg width="14" height="14"><use href="#ball"/></svg></button>
      <button aria-label="Custom properties"><svg width="14" height="14"><use href="#prop"/></svg></button>
    </div>
  </section>
</main>

<div class="sheetbar">
  <div class="navs"><button aria-label="First"><svg width="9" height="9" viewBox="0 0 9 9"><path d="M1 1v7M8 1v7L3 4.500z"/></svg></button><button aria-label="Previous"><svg width="9" height="9" viewBox="0 0 9 9"><path d="M7 1v7L2 4.500z"/></svg></button><button aria-label="Next"><svg width="9" height="9" viewBox="0 0 9 9"><path d="M2 1v7l5-3.500z"/></svg></button><button aria-label="Last"><svg width="9" height="9" viewBox="0 0 9 9"><path d="M8 1v7M1 1v7l5-3.500z"/></svg></button></div>
  <a href="#" class="on">Model</a><a href="#">Motion Study 1</a>
</div>
<div class="status"><span class="ver">SolidWorks Premium 2011 x64 Edition</span><span class="edit">Editing Part</span><button class="q" aria-label="Quick tips">?</button><svg width="14" height="13" viewBox="0 0 14 13"><path d="M2 7l6-6c4-1 6 3 4 6l-5 5c-4 1-7-2-5-5z" fill="url(#gold)" stroke="#9a7008"/><path d="M5 8l5-5M7 10l4-4" stroke="#9a7008" stroke-width=".8"/></svg></div>

<footer class="taskbar">
  <button class="start" aria-label="Start"><svg width="32" height="32" viewBox="0 0 32 32"><defs><radialGradient id="orb" cy=".9"><stop offset="0" stop-color="#58d8f0"/><stop offset=".6" stop-color="#2868a0"/><stop offset="1" stop-color="#173c6c"/></radialGradient></defs><circle cx="16" cy="16" r="15" fill="url(#orb)" stroke="#9cc0e4" stroke-width=".8"/><path d="M3 12a14 12 0 0 1 26 0c-8 5-18 5-26 0z" fill="#fff" opacity=".35"/><path d="M8 10c3-2 5-1 7 0l-1 6c-2-1-4-2-7 0z" fill="#f06a30"/><path d="M16 10c3 1 5 1 8-1l-2 7c-2 1-4 1-7 0z" fill="#8ccc40"/><path d="M7 17c3-2 5-1 7 0l-2 6c-2-1-4-1-7 0z" fill="#48a8ec"/><path d="M15 17c2 1 4 1 7 0l-2 6c-2 1-4 1-7 0z" fill="#fccc38"/></svg></button>
  <button class="app open" aria-label="Chrome"><svg width="26" height="26" viewBox="0 0 26 26"><circle cx="13" cy="13" r="12" fill="#ecc52c"/><path d="M2.600 7A12 12 0 0 1 23.400 7H13L8 16z" fill="#d93a2c"/><path d="M2.600 7A12 12 0 0 0 12 25l6-9-5-3-5 3z" fill="#3ca24a"/><circle cx="13" cy="13" r="5.500" fill="#fff"/><circle cx="13" cy="13" r="4.300" fill="#3f7ed0"/></svg></button>
  <button class="app open" aria-label="Explorer"><svg width="28" height="26" viewBox="0 0 28 26"><path d="M2 3h9l2 2h12v18H2z" fill="#f6e28c" stroke="#c8a848"/><path d="M4 7h20v13H4z" fill="#fbefa8"/><path d="M6 3h3M12 5h3M18 6h3" stroke="#4a9c58" stroke-width="2"/><path d="M5 25v-6c0-3 18-3 18 0v6h-4v-4H9v4z" fill="#9fd4f2" stroke="#5a9cc8"/></svg></button>
  <button class="app" aria-label="Outlook"><svg width="26" height="26" viewBox="0 0 26 26"><path d="M1 4l14-3 10 2v19l-10 3-14-3z" fill="#f4a820"/><path d="M14 2h10v20H14z" fill="#fbe6b0"/><circle cx="8.500" cy="11.500" r="4.800" fill="none" stroke="#fff" stroke-width="3"/><path d="M14 13h11v7H14z" fill="#fff" stroke="#cc8c18"/><circle cx="20" cy="10" r="4" fill="#fff" stroke="#c88818"/><path d="M20 8v2h2" stroke="#666" fill="none"/></svg></button>
  <button class="app" aria-label="Handshake"><svg width="28" height="28" viewBox="0 0 28 28"><circle cx="14" cy="14" r="10" fill="#e03018"/><circle cx="14" cy="14" r="11.500" fill="none" stroke="#e8301c" stroke-width="3.500" stroke-dasharray="2.400 1.200"/><circle cx="14" cy="14" r="9" fill="none" stroke="#fcd83c" stroke-width="2.500" stroke-dasharray="1.500 1.500"/><path d="M1 9h3v10H1zM24 9h3v10h-3z" fill="#fff" stroke="#224"/><path d="M5 12l5-1 4 1 5-1 4 1v4l-7 5-4-1-7-4z" fill="#f4c878" stroke="#5a2808"/><path d="M10 14l4-2 5 5M10 17l4 2" fill="none" stroke="#5a2808"/></svg></button>
  <button class="app open many" aria-label="Skype"><svg width="26" height="26" viewBox="0 0 26 26"><rect x="1" y="1" width="18" height="18" rx="9" fill="#12a8e8"/><rect x="7" y="7" width="18" height="18" rx="9" fill="#12a8e8"/><circle cx="13" cy="13" r="10.500" fill="#18b0f0"/><path d="M17.500 9.500c-1.500-4-9-3-9 .5 0 4 9 2 9 6 0 3.500-8 4-9.500 0" fill="none" stroke="#fff" stroke-width="2.800"/></svg></button>
  <button class="app open" aria-label="Parrot"><svg width="28" height="28" viewBox="0 0 28 28"><path d="M5 7C6 1 15 0 16 7c1 5 8 8 8 14 0 5-6 6-12 5-6-2-7-11-5-15z" fill="#74b830" stroke="#3c6a14"/><path d="M8 5c3-4 7-1 7 4-3 4-7 2-7-4z" fill="#f0e048"/><circle cx="11.500" cy="6" r="1.600" fill="#fff" stroke="#222"/><path d="M7 5c-5 0-5 6-2 8 2-1 4-3 3-6z" fill="#d82c20"/><path d="M15 13c6 2 9 6 9 12-5-1-9-5-9-12z" fill="#dcc838"/></svg></button>
  <button class="app open" aria-label="Acrobat"><svg width="24" height="24" viewBox="0 0 24 24"><path d="M0 0h24v24H0z" fill="#b8120c"/><path d="M1 1h22v11H1z" fill="#cc2a20"/><path d="M12 4c-2 0 0 8 6 11 5 1 3-2-3-1-5 0-10 2-10 4 1 2 5-3 7-9 0-3 1-5 0-5z" fill="none" stroke="#fff" stroke-width="1.300"/></svg></button>
  <button class="app open active" aria-label="SolidWorks"><svg width="28" height="28"><use href="#swcube"/></svg></button>
  <button class="app open" aria-label="Word"><svg width="25" height="25" viewBox="0 0 25 25"><path d="M1 4l5-3h17v23H1z" fill="#eef4fc" stroke="#a8c0e0"/><path d="M3 6l4 12 4-10 3 10 4-13" fill="none" stroke="#2458a8" stroke-width="3"/><path d="M13 15h9l2 9H13z" fill="#fff" stroke="#b0c4e0"/></svg></button>
  <button class="app open" aria-label="Photo viewer"><svg width="26" height="22" viewBox="0 0 26 22"><path d="M1 2h24v17H1z" fill="#e8f4fc" stroke="#9cc8e4"/><path d="M2 3h22v8H2z" fill="#8cc8f0"/><path d="M2 8l9 3 13-1v3H2z" fill="#3c6c58"/><path d="M2 13h22v5H2z" fill="#9cc4d0"/><path d="M4 5h10v2H4z" fill="#fff" opacity=".7"/><path d="M1 5V1h4M21 1h4v4M1 16v4h4M21 20h4v-4" fill="none" stroke="#3a8ccc" stroke-width="1.500"/></svg></button>
  <div class="tray">
    <svg width="8" height="6" viewBox="0 0 8 6"><path d="M1 5l3-4 3 4z" fill="#fff"/></svg>
    <svg width="14" height="14" viewBox="0 0 14 14"><path d="M2 1v13" stroke="#fff" stroke-width="1.500"/><path d="M3 2h5l1 2h4v5H8L7 7H3z" fill="#fff"/></svg>
    <svg width="14" height="14" viewBox="0 0 14 14"><path d="M5 4h8v6H5zM9 10v2M6 12.500h6" fill="#5a80b8" stroke="#fff" stroke-width="1.300"/><path d="M1 2h3v4H1zM2.500 6v6H6" fill="none" stroke="#fff"/></svg>
    <svg width="14" height="14" viewBox="0 0 14 14"><path d="M1 5h3l4-4v12L4 9H1z" fill="#fff"/><path d="M9.500 5c1 1 1 3 0 4M11.500 3c2 2 2 6 0 8" fill="none" stroke="#fff"/></svg>
  </div>
  <time class="clock">3:24 PM<br>6/27/2011</time>
  <button class="showdesk" aria-label="Show desktop"></button>
</footer>
</body>
</html>
```

FILE: styles.css
```css
* { box-sizing: border-box; }
html, body { height: 100%; }
body {
  margin: 0;
  display: flex;
  flex-direction: column;
  overflow: hidden;
  background: #fff;
  color: #30344a;
  font: 9px/11px "DejaVu Sans Condensed", "DejaVu Sans", sans-serif;
}
button { font: inherit; color: inherit; background: none; border: 0; padding: 0; }
a { color: inherit; text-decoration: none; }
svg { display: block; flex: none; }
.defs { position: absolute; width: 0; height: 0; }
.dd { color: #8a8d9a; }
.dd.dark { color: #14161e; }

/* title bar */
.titlebar {
  flex: none;
  height: 24px;
  display: flex;
  align-items: center;
  background: linear-gradient(#e9ebf5, #cdd1e3 60%, #b7bcd3);
  border-bottom: 1px solid #62667e;
}
.brand {
  width: 111px;
  height: 23px;
  display: flex;
  align-items: center;
  gap: 2px;
  padding-left: 2px;
  border-right: 7px solid #686e98;
  font-size: 13px;
  color: #33323c;
}
.menu { display: flex; gap: 13px; padding: 2px 10px 0 8px; }
.menu a { color: #2c3050; }
.pin { width: 17px; height: 23px; display: grid; place-items: center; background: #c6c9d6; border-right: 1px solid #70758c; }
.quick { display: flex; align-items: center; gap: 2px; padding-left: 4px; }
.quick button { width: 17px; display: grid; place-items: center; }
.quick .dd { margin-right: 3px; }
.doc-title { flex: 1; margin: 0; padding-top: 2px; text-align: center; font-size: 9px; font-weight: normal; }
.search {
  width: 169px;
  height: 19px;
  display: flex;
  align-items: center;
  gap: 4px;
  padding: 0 3px 0 5px;
  border: 1px solid #6b7086;
  border-radius: 3px;
  background: linear-gradient(#fafbfe, #dde0ea);
}
.search input { flex: 1; min-width: 0; border: 0; padding: 1px 0 0 2px; background: none; font: inherit; color: #5b5f70; }
.wincontrols { display: flex; align-items: center; gap: 8px; padding: 0 5px 0 7px; }
.help { font-size: 13px; font-weight: bold; color: #696e82; }

/* ribbon */
.ribbon {
  flex: none;
  height: 62px;
  display: flex;
  align-items: center;
  padding: 0 6px;
  color: #6a6d78;
  background: linear-gradient(#fdfdfe, #f0f1f6 45%, #d6d9e6);
  border-bottom: 2px solid #5a5d72;
}
.ribbon svg { color: #a2a4ac; }
.big { height: 56px; display: flex; flex-direction: column; align-items: center; padding-top: 9px; text-align: center; flex: none; }
.menu-btn { padding-top: 3px; }
.menu-btn span { height: 26px; padding-top: 2px; }
.menu-btn .dd { margin-top: 4px; }
.stack { display: flex; flex-direction: column; gap: 4px; padding-top: 2px; flex: none; }
.stack button { display: flex; align-items: center; gap: 5px; white-space: nowrap; }
.sep { width: 1px; height: 58px; margin: 0 1px; background: #cdd0dc; flex: none; }
.w28 { width: 28px; } .w38 { width: 38px; } .w42 { width: 42px; } .w44 { width: 44px; }
.w50 { width: 51px; } .w85 { width: 85px; } .w110 { width: 108px; }
.ds { margin-left: auto; }

/* workspace */
.workspace {
  flex: 1;
  min-height: 0;
  display: grid;
  grid-template: 16px 1fr / 163px 1fr;
  position: relative;
}
.cmdtabs { grid-area: 1 / 1 / 2 / 3; display: flex; z-index: 2; justify-self: start; font: 10px/14px "Liberation Sans", Arial, sans-serif; }
.cmdtabs a { padding: 0 7px; color: #555a6e; background: #b1b5ca; border: solid #62667c; border-width: 0 1px 2px 0; }
.cmdtabs a.on { padding: 0 6px; font-weight: bold; color: #2e3244; background: #e4e6ef; border-bottom-color: #e4e6ef; }
.view { grid-area: 1 / 2 / 3 / 3; position: relative; min-height: 0; border-right: 1px solid #55586a; }
.scene { width: 100%; height: 100%; }

/* property panel */
.panel {
  grid-area: 2 / 1;
  position: relative;
  padding: 3px 2px 0 2px;
  background: #e1e4ed;
  border-right: 2px solid #7c8094;
  border-top: 1px solid #62667c;
  box-shadow: inset 0 3px 0 #c6cad9;
}
.ptabs { display: flex; gap: 1px; padding-top: 3px; margin-left: -2px; }
.ptabs button { width: 22px; height: 19px; display: grid; place-items: center; background: #b9bdcf; border: 1px solid #7e839a; border-bottom: 0; border-radius: 3px 3px 0 0; }
.ptabs button.on { background: #eceef5; }
.ptitle {
  height: 20px;
  margin: 0 -1px;
  display: flex;
  align-items: center;
  gap: 1px;
  padding: 0 6px 0 1px;
  color: #fff;
  font-size: 11px;
  background: linear-gradient(#a1a5ba, #73778f);
  border: 1px solid #50546c;
}
.ptitle span { flex: 1; }
.confirm { height: 29px; display: flex; align-items: center; gap: 8px; padding: 0 0 6px 1px; }
.group { margin: 0 0 6px; background: #e7e8f1; border: 1px solid #a3a7b8; }
.group.skip { margin-bottom: 9px; }
.group h3 {
  height: 16px;
  margin: 0;
  display: flex;
  align-items: center;
  justify-content: space-between;
  padding: 1px 3px 0 4px;
  font-size: 9px;
  color: #333a52;
  background: linear-gradient(#dcdfe9, #b9bdce);
  border-bottom: 1px solid #a3a7b8;
}
.group.skip h3 { border-bottom: 0; }
.body { padding: 4px 6px 0 4px; }
.body.params { height: 101px; padding-top: 3px; }
.row { display: flex; align-items: center; margin-bottom: 6px; height: 20px; gap: 4px; }
.params label { padding-top: 2px; }
.dir { width: 20px; height: 20px; display: grid; place-items: center; border: 1px solid #8f93a6; border-radius: 3px; background: #eff0f5; }
.ric { margin: 0 2px; }
.row input { min-width: 0; height: 19px; border: 1px solid #b4b7c4; background: #fff; padding: 0 3px 2px; font: inherit; color: #42465a; }
.row .sel { flex: 1; padding: 0 1px 4px; border: 1px solid #3f9be0; color: #fff; background: linear-gradient(#3a9af2 12px, #bfe3fb 13px); }
.row .num { flex: 1; }
.spin { width: 12px; height: 20px; margin-left: 1px; display: flex; flex-direction: column; background: #eef0f4; }
.spin button { flex: 1; display: grid; place-items: center; }
.spin button::after { content: ""; border: 3px solid transparent; border-top: 0; border-bottom-color: #333; }
.spin .dn::after { border-bottom: 0; border-top: 3px solid #333; }
label { display: flex; align-items: flex-start; gap: 2px; color: #20243a; padding-left: 24px; }
label input { appearance: none; flex: none; width: 11px; height: 11px; margin: 0; border: 1px solid #85899a; background: #fafafc; display: grid; place-items: center; }
label input[type=checkbox]:checked::after { content: ""; width: 4px; height: 7px; border: solid #3c4880; border-width: 0 2px 2px 0; transform: rotate(40deg); margin-top: -2px; }
label input[type=radio] { border-radius: 50%; }
label input[type=radio]:checked::after { content: ""; width: 7px; height: 7px; border-radius: 50%; background: radial-gradient(#7cd0f4, #1c4878 50%); }
.feats, .faces { display: flex; align-items: flex-start; gap: 4px; }
.feats { height: 69px; }
.faces { height: 55px; }
.feats .ric, .faces .ric { margin-top: 2px; }
textarea { flex: 1; min-width: 0; height: 47px; resize: none; border: 1px solid #8b8f9e; background: #fff; padding: 1px 3px; font: inherit; color: #50546a; overflow: hidden; }
.opts { height: 90px; display: flex; flex-direction: column; gap: 8px; }
.handle { position: absolute; right: -9px; top: 347px; width: 9px; height: 25px; z-index: 3; display: flex; flex-direction: column; justify-content: space-evenly; align-items: center; background: #dcdfe9; border: 1px solid #6c7086; border-left: 0; border-radius: 0 4px 4px 0; }
.handle i { border: 2px solid transparent; border-left: 0; border-right: 3px solid #2c3248; }

/* overlays on the graphics area */
.tree { position: absolute; left: 2px; top: 20px; display: flex; align-items: center; gap: 4px; color: #222; }
.plus { width: 7px; height: 7px; border: 1px solid #777; font-size: 7px; line-height: 5px; text-align: center; }
.hud { position: absolute; top: 4px; left: 0; right: 6px; display: flex; justify-content: center; gap: 4px; }
.hud button { display: flex; align-items: center; gap: 2px; }
.hud .dd { color: #4c5060; }
.docctl { position: absolute; top: 6px; right: 8px; display: flex; gap: 8px; }
.corner { position: absolute; top: 26px; right: 33px; display: flex; align-items: flex-start; gap: 3px; opacity: .32; }
.corner .no { padding-top: 24px; }
.taskpane { position: absolute; top: 50px; right: -1px; width: 20px; display: flex; flex-direction: column; }
.taskpane button { height: 20px; display: grid; place-items: center; background: #b5b9cd; border: 1px solid #6c7088; border-right: 0; border-radius: 4px 0 0 4px; }
.taskpane button.on { background: #e8eaf2; }

.dim text { font: italic 14px "DejaVu Sans Condensed", "DejaVu Sans", sans-serif; fill: #0b0bc8; }
.callout text { font: 9px "Liberation Sans", Arial, sans-serif; fill: #3a3e62; }
.callout .val { fill: #20223a; }
.triad text { font: 9px "DejaVu Sans Condensed", sans-serif; }
.iso { font: bold 10px "DejaVu Sans Condensed", sans-serif; fill: #14163a; }

/* bottom bars */
.sheetbar { flex: none; height: 14px; display: flex; background: #e5e7ee; border-top: 1px solid #6c7086; border-bottom: 1px solid #6c7086; font: 10px/11px "Liberation Sans", Arial, sans-serif; }
.navs { display: flex; padding: 0 2px; background: #b1b5c8; margin-right: 1px; }
.navs button { width: 13px; display: grid; place-items: center; border-right: 1px solid #8a8ea2; }
.navs path { fill: #8e92a6; stroke: #8e92a6; }
.sheetbar a { padding: 0 7px; color: #3c4056; background: #b9bccd; border: solid #6c7086; border-width: 0 1px 1px 0; }
.sheetbar a.on { padding: 0 8px; font-weight: bold; background: #e1e4ed; border-left-width: 1px; }
.status {
  flex: none;
  height: 15px;
  display: flex;
  align-items: center;
  padding: 0 11px 0 2px;
  color: #22242e;
  background: linear-gradient(#d3d5e2, #b6b8c4);
  font: 9px/12px "Noto Sans", "Open Sans", sans-serif;
}
.ver { flex: 1; }
.edit { margin-right: 28px; }
.q { width: 11px; height: 11px; margin-right: 42px; border: 1px solid #3c7c5c; background: #e4f6ec; color: #0c8440; font: bold 9px/9px "Liberation Sans", sans-serif; }

.taskbar {
  flex: none;
  height: 33px;
  display: flex;
  align-items: center;
  gap: 3px;
  background: linear-gradient(90deg, #3c68ac, #4472ba 30%, #2c5ca8 45%, #3262ae 70%, #5686cc 88%, #4a78b4 92%, #2e5a94);
  border-top: 1px solid #2c4f88;
}
.start { width: 46px; display: grid; place-items: center; }
.app { width: 47px; height: 32px; display: grid; place-items: center; border: 1px solid transparent; border-radius: 2px; }
.app.open { width: 49px; border-color: #a4bde2; background: linear-gradient(135deg, #a9c0e4, #5580c2 50%, #6d93cf); }
.app.active { background: linear-gradient(135deg, #eef3fb, #a8bfe2); }
.app.many { width: 47px; margin-right: 3px; box-shadow: 3px 0 0 -1px #5580c2, 4px 0 0 -1px #a4bde2; }
.tray { margin-left: auto; display: flex; align-items: center; gap: 7px; padding-right: 11px; }
.clock { color: #fff; text-align: center; font: 9px/14px "Open Sans", "Noto Sans", sans-serif; }
.showdesk { width: 11px; height: 32px; margin-left: 7px; border: 1px solid #6f94c8; background: linear-gradient(135deg, #6c92c4, #2c5690); }
```
